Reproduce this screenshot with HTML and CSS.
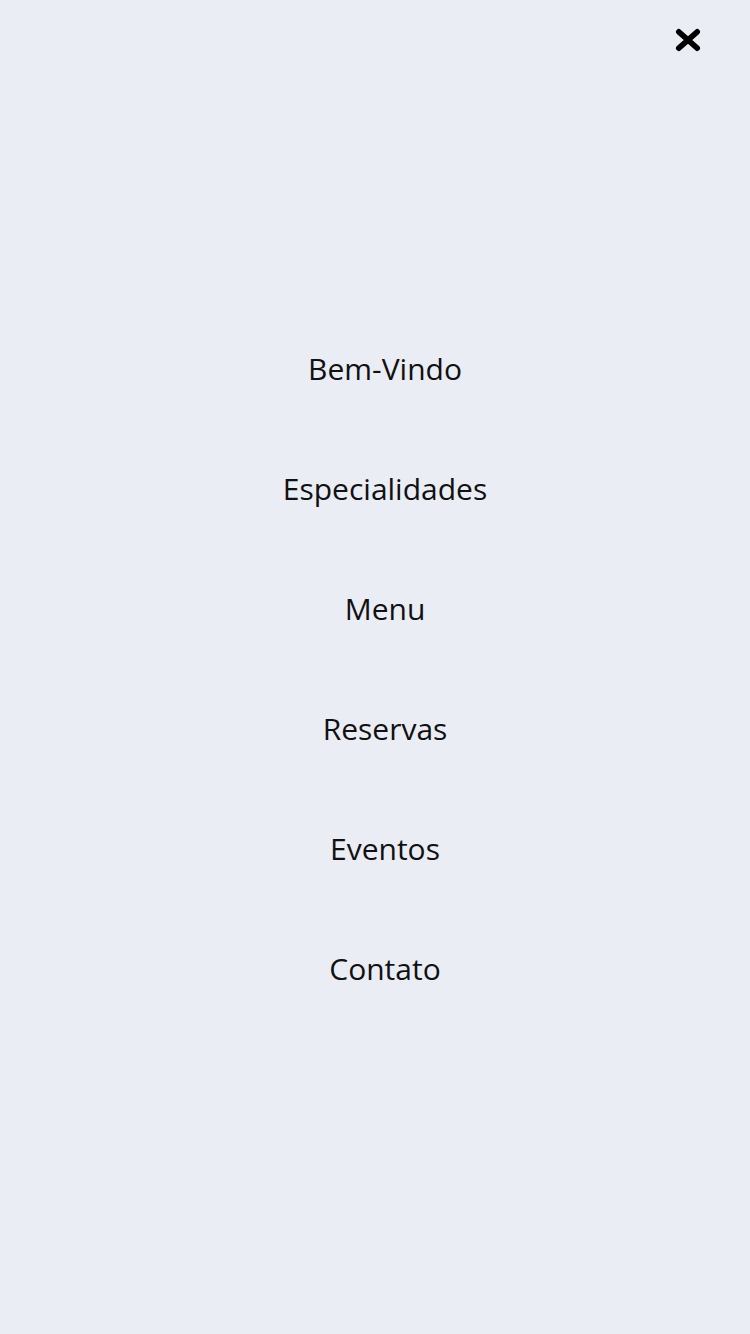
FILE: index.html
```html
<!DOCTYPE html>
<html lang="pt">
<head>
<meta charset="utf-8">
<title>Menu</title>
<link rel="stylesheet" href="styles.css">
</head>
<body>
<div class="overlay">
  <header class="topbar">
    <button class="close" aria-label="Fechar">
      <svg width="26" height="24" viewBox="0 0 26 24"><path d="M3.8 3.8 L22.2 20.2 M22.2 3.8 L3.8 20.2" stroke="#000" stroke-width="5.6" stroke-linecap="round" fill="none"/></svg>
    </button>
  </header>
  <nav class="nav">
    <ul class="list">
      <li><a href="#">Bem-Vindo</a></li>
      <li><a href="#">Especialidades</a></li>
      <li><a href="#">Menu</a></li>
      <li><a href="#">Reservas</a></li>
      <li><a href="#">Eventos</a></li>
      <li><a href="#">Contato</a></li>
    </ul>
  </nav>
</div>
</body>
</html>
```
FILE: styles.css
```css
html, body {
  margin: 0;
  padding: 0;
}
body {
  background: #eaedf4;
  font-family: "Open Sans", "Liberation Sans", sans-serif;
}
.overlay {
  width: 750px;
  height: 1334px;
  position: relative;
  display: flex;
  flex-direction: column;
  justify-content: center;
}
.topbar {
  position: absolute;
  top: 28px;
  right: 49px;
}
.close {
  background: none;
  border: 0;
  padding: 0;
  display: block;
  cursor: pointer;
}
.close svg { display: block; }
.nav {
  padding-top: 4px;
  padding-left: 20px;
}
.list {
  list-style: none;
  margin: 0;
  padding: 0;
  display: flex;
  flex-direction: column;
}
.list li {
  height: 120px;
  display: flex;
  align-items: center;
  justify-content: center;
}
.list a {
  color: #111;
  text-decoration: none;
  font-size: 30px;
  line-height: 1;
}
```
